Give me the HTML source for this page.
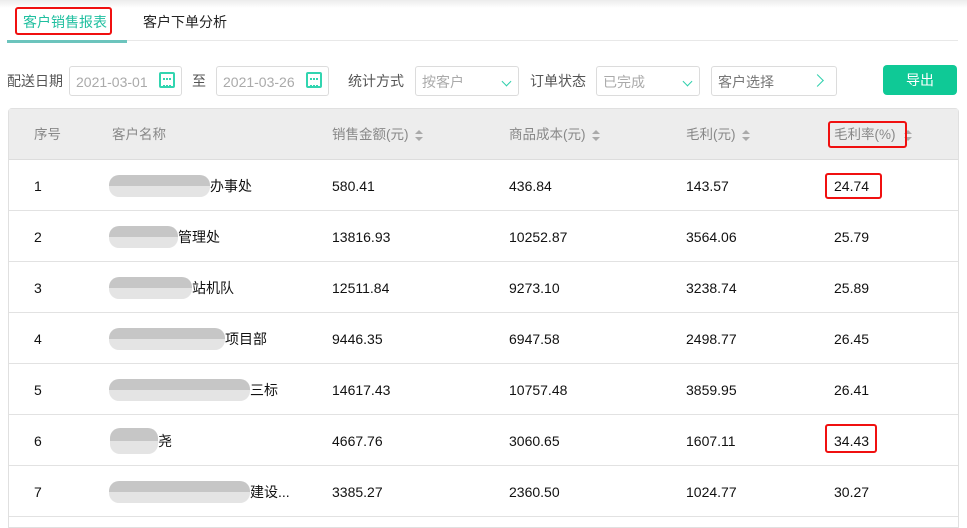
<!DOCTYPE html>
<html><head><meta charset="utf-8"><style>
*{margin:0;padding:0;box-sizing:border-box}
body{width:967px;height:522px;overflow:hidden;background:#fff;font-family:"Liberation Sans","Noto Sans CJK SC",sans-serif;font-size:13px;color:#222;position:relative}
.abs{position:absolute}
.shadow{left:0;top:0;width:967px;height:8px;background:linear-gradient(#ececec,#fff)}
.tabline{left:7px;top:40px;width:951px;height:1px;background:#e8e8e8}
.tabul{left:7px;top:40px;width:120px;height:3px;background:#6cc4bd}
.tab{top:13px;font-size:14px;line-height:18px}
.red{border:2px solid #f01010;border-radius:3px}
.lbl{top:72px;font-size:14px;color:#555;line-height:18px}
.inp{top:66px;height:30px;border:1px solid #dcdcdc;border-radius:3px;color:#aaa;font-size:14px;padding:6px 0 0 6px;line-height:18px}
.cal{position:absolute;right:6px;top:5px;width:16px;height:16px;border:2px solid #32d5b0;border-radius:2px}
.cal:before{content:"";position:absolute;left:2px;top:4px;width:8px;height:5px;border-top:2px dotted #32d5b0;border-bottom:2px dotted #32d5b0}
.chev{position:absolute;right:8px;top:11px;width:7px;height:7px;border-right:1.5px solid #2fd0ad;border-bottom:1.5px solid #2fd0ad;transform:rotate(45deg)}
.chr{position:absolute;right:14px;top:9px;width:9px;height:9px;border-right:1.5px solid #2fd0ad;border-top:1.5px solid #2fd0ad;transform:rotate(45deg)}
.btn{left:883px;top:65px;width:74px;height:30px;background:#0fc996;border-radius:4px;color:#fff;font-size:14px;text-align:center;line-height:30px}
.tbl{left:8px;top:108px;width:951px;height:420px;border:1px solid #e0e0e0;border-radius:4px 4px 0 0}
.hdr{left:9px;top:109px;width:949px;height:51px;background:#ededed;border-bottom:1px solid #ddd}
.h{top:126px;color:#888;font-size:13.5px;line-height:18px}
.sort{display:inline-block;margin-left:6px;vertical-align:middle;width:8px;height:11px;position:relative}
.sort:before{content:"";position:absolute;left:0;top:0;border:4px solid transparent;border-bottom:4px solid #aaa;border-top:0}
.sort:after{content:"";position:absolute;left:0;bottom:0;border:4px solid transparent;border-top:4px solid #aaa;border-bottom:0}
.row{left:9px;width:949px;height:51px;border-bottom:1px solid #e2e2e2}
.c{font-size:14px;color:#111;line-height:17px}
.blur{height:22px;border-radius:10px;background:linear-gradient(to bottom,#c6c6c6 0 50%,#e4e4e4 50%);}
</style></head><body>
<div class="abs shadow"></div>
<div class="abs red" style="left:15px;top:7px;width:97px;height:28px"></div>
<div class="abs tab" style="left:23px;color:#1fbf9f">客户销售报表</div>
<div class="abs tab" style="left:143px;color:#222">客户下单分析</div>
<div class="abs tabline"></div><div class="abs tabul"></div>

<div class="abs lbl" style="left:7px">配送日期</div>
<div class="abs inp" style="left:69px;width:113px">2021-03-01<span class="cal"></span></div>
<div class="abs lbl" style="left:192px">至</div>
<div class="abs inp" style="left:216px;width:113px">2021-03-26<span class="cal"></span></div>
<div class="abs lbl" style="left:348px">统计方式</div>
<div class="abs inp" style="left:415px;width:104px">按客户<span class="chev"></span></div>
<div class="abs lbl" style="left:530px">订单状态</div>
<div class="abs inp" style="left:596px;width:104px">已完成<span class="chev"></span></div>
<div class="abs inp" style="left:711px;width:126px;color:#777">客户选择<span class="chr"></span></div>
<div class="abs btn">导出</div>

<div class="abs tbl"></div>
<div class="abs hdr"></div>
<div class="abs h" style="left:34px">序号</div>
<div class="abs h" style="left:112px">客户名称</div>
<div class="abs h" style="left:332px">销售金额(元)<span class="sort"></span></div>
<div class="abs h" style="left:509px">商品成本(元)<span class="sort"></span></div>
<div class="abs h" style="left:686px">毛利(元)<span class="sort"></span></div>
<div class="abs h" style="left:834px">毛利率(%)<span class="sort" style="margin-left:8px"></span></div>
<div class="abs red" style="left:828px;top:121px;width:79px;height:27px"></div>

<div class="abs row" style="top:160px"></div>
<div class="abs row" style="top:211px"></div>
<div class="abs row" style="top:262px"></div>
<div class="abs row" style="top:313px"></div>
<div class="abs row" style="top:364px"></div>
<div class="abs row" style="top:415px"></div>
<div class="abs row" style="top:466px"></div>

<div class="abs c" style="left:34px;top:178px">1</div><div class="abs blur" style="left:109px;top:175px;width:101px"></div><div class="abs c" style="left:210px;top:178px">办事处</div><div class="abs c" style="left:332px;top:178px">580.41</div><div class="abs c" style="left:509px;top:178px">436.84</div><div class="abs c" style="left:686px;top:178px">143.57</div><div class="abs c" style="left:834px;top:178px">24.74</div>
<div class="abs red" style="left:825px;top:173px;width:57px;height:26px"></div>

<div class="abs c" style="left:34px;top:229px">2</div><div class="abs blur" style="left:109px;top:226px;width:69px"></div><div class="abs c" style="left:178px;top:229px">管理处</div><div class="abs c" style="left:332px;top:229px">13816.93</div><div class="abs c" style="left:509px;top:229px">10252.87</div><div class="abs c" style="left:686px;top:229px">3564.06</div><div class="abs c" style="left:834px;top:229px">25.79</div>

<div class="abs c" style="left:34px;top:280px">3</div><div class="abs blur" style="left:109px;top:277px;width:83px"></div><div class="abs c" style="left:192px;top:280px">站机队</div><div class="abs c" style="left:332px;top:280px">12511.84</div><div class="abs c" style="left:509px;top:280px">9273.10</div><div class="abs c" style="left:686px;top:280px">3238.74</div><div class="abs c" style="left:834px;top:280px">25.89</div>

<div class="abs c" style="left:34px;top:331px">4</div><div class="abs blur" style="left:109px;top:328px;width:116px"></div><div class="abs c" style="left:225px;top:331px">项目部</div><div class="abs c" style="left:332px;top:331px">9446.35</div><div class="abs c" style="left:509px;top:331px">6947.58</div><div class="abs c" style="left:686px;top:331px">2498.77</div><div class="abs c" style="left:834px;top:331px">26.45</div>

<div class="abs c" style="left:34px;top:382px">5</div><div class="abs blur" style="left:109px;top:379px;width:141px"></div><div class="abs c" style="left:250px;top:382px">三标</div><div class="abs c" style="left:332px;top:382px">14617.43</div><div class="abs c" style="left:509px;top:382px">10757.48</div><div class="abs c" style="left:686px;top:382px">3859.95</div><div class="abs c" style="left:834px;top:382px">26.41</div>

<div class="abs c" style="left:34px;top:433px">6</div><div class="abs blur" style="left:110px;top:428px;width:48px;height:26px"></div><div class="abs c" style="left:158px;top:433px">尧</div><div class="abs c" style="left:332px;top:433px">4667.76</div><div class="abs c" style="left:509px;top:433px">3060.65</div><div class="abs c" style="left:686px;top:433px">1607.11</div><div class="abs c" style="left:834px;top:433px">34.43</div>
<div class="abs red" style="left:825px;top:424px;width:52px;height:29px"></div>

<div class="abs c" style="left:34px;top:484px">7</div><div class="abs blur" style="left:109px;top:481px;width:141px"></div><div class="abs c" style="left:250px;top:484px">建设...</div><div class="abs c" style="left:332px;top:484px">3385.27</div><div class="abs c" style="left:509px;top:484px">2360.50</div><div class="abs c" style="left:686px;top:484px">1024.77</div><div class="abs c" style="left:834px;top:484px">30.27</div>
</body></html>
